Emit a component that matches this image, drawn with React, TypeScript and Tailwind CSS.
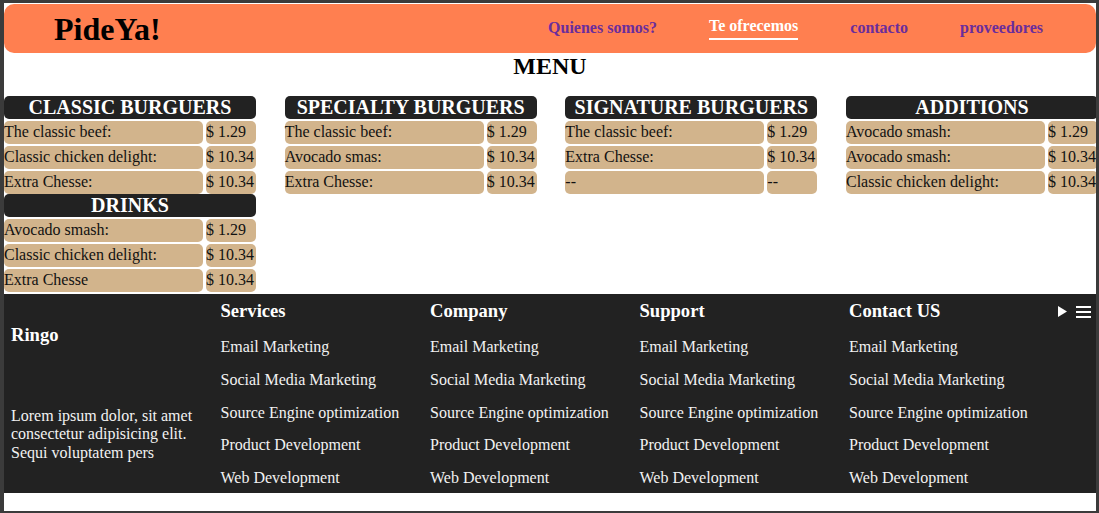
import React from "react";

type Item = [string, string];
type Section = { title: string; items: Item[] };

const sections: Section[] = [
  {
    title: "CLASSIC BURGUERS",
    items: [
      ["The classic beef:", "$ 1.29"],
      ["Classic chicken delight:", "$ 10.34"],
      ["Extra Chesse:", "$ 10.34"],
    ],
  },
  {
    title: "SPECIALTY BURGUERS",
    items: [
      ["The classic beef:", "$ 1.29"],
      ["Avocado smas:", "$ 10.34"],
      ["Extra Chesse:", "$ 10.34"],
    ],
  },
  {
    title: "SIGNATURE BURGUERS",
    items: [
      ["The classic beef:", "$ 1.29"],
      ["Extra Chesse:", "$ 10.34"],
      ["--", "--"],
    ],
  },
  {
    title: "ADDITIONS",
    items: [
      ["Avocado smash:", "$ 1.29"],
      ["Avocado smash:", "$ 10.34"],
      ["Classic chicken delight:", "$ 10.34"],
    ],
  },
  {
    title: "DRINKS",
    items: [
      ["Avocado smash:", "$ 1.29"],
      ["Classic chicken delight:", "$ 10.34"],
      ["Extra Chesse", "$ 10.34"],
    ],
  },
];

const links = [
  "Email Marketing",
  "Social Media Marketing",
  "Source Engine optimization",
  "Product Development",
  "Web Development",
];

function MenuCard({ s }: { s: Section }) {
  return (
    <div className="w-[252px] flex flex-col">
      <div className="h-[23px] bg-[#222222] rounded-[5px] flex items-center justify-center text-white font-bold text-[20px] leading-none pb-[1px]">
        {s.title}
      </div>
      {s.items.map(([n, p], i) => (
        <div key={i} className="mt-[2px] h-[23px] flex gap-[3px] text-[16px] text-[#111]">
          <div className="w-[199px] bg-[#d2b48c] rounded-[5px] flex items-center whitespace-nowrap pb-[1px]">{n}</div>
          <div className="w-[50px] bg-[#d2b48c] rounded-[5px] flex items-center whitespace-nowrap pb-[1px]">{p}</div>
        </div>
      ))}
    </div>
  );
}

function FooterCol({ title }: { title: string }) {
  return (
    <div className="flex flex-col">
      <div className="text-[18.6px] font-bold leading-[21px] text-white">{title}</div>
      <div className="mt-[17px] flex flex-col gap-[14.35px]">
        {links.map((l) => (
          <div key={l} className="text-[16px] leading-[18.4px] text-[#f2f2f2] whitespace-nowrap">
            {l}
          </div>
        ))}
      </div>
    </div>
  );
}

export default function App() {
  return (
    <div className="w-[1099px] h-[513px] bg-[#3b3b3b] pl-[4px] pt-[3px] pr-[3px] pb-[2px]">
      <div className="bg-white h-full overflow-hidden font-['Liberation_Serif',serif] text-black">
        <header className="mt-[1px] h-[49px] bg-[#ff7f50] rounded-[10px] flex items-center">
          <div className="ml-[50px] text-[32px] font-bold leading-none">PideYa!</div>
          <nav className="ml-auto mr-[53px] flex items-center gap-[52px] text-[16px] font-bold -mt-[1px]">
            <span className="text-[#6a2d9c]">Quienes somos?</span>
            <span className="text-white border-b-2 border-white pb-[3px] leading-[18px]">Te ofrecemos</span>
            <span className="text-[#6a2d9c]">contacto</span>
            <span className="text-[#6a2d9c]">proveedores</span>
          </nav>
        </header>
        <h2 className="text-center text-[24px] font-bold leading-[28px] -mt-[1px]">MENU</h2>
        <div className="mt-[16px] grid grid-cols-[repeat(4,252px)] gap-x-[28.67px] w-[1200px]">
          {sections.map((s) => (
            <MenuCard key={s.title} s={s} />
          ))}
        </div>
        <footer className="mt-[2px] h-[199px] bg-[#222222] text-white grid grid-cols-[repeat(5,209.5px)_1fr] pl-[7px] pt-[6px]">
          <div className="flex flex-col">
            <div className="mt-[24px] text-[18.6px] font-bold leading-[21px]">Ringo</div>
            <div className="mt-[62px] text-[16px] leading-[18.4px] text-[#f2f2f2] w-[200px]">
              Lorem ipsum dolor, sit amet consectetur adipisicing elit. Sequi voluptatem pers
            </div>
          </div>
          <FooterCol title="Services" />
          <FooterCol title="Company" />
          <FooterCol title="Support" />
          <FooterCol title="Contact US" />
          <div className="flex items-start gap-[8px] pt-[6px] ml-[-1px]">
            <svg width="10" height="11" viewBox="0 0 10 11">
              <polygon points="0,0 9,5.5 0,11" fill="white" />
            </svg>
            <svg width="15" height="12" viewBox="0 0 15 12">
              <rect x="0" y="0" width="15" height="2" fill="white" />
              <rect x="0" y="5" width="15" height="2" fill="white" />
              <rect x="0" y="10" width="15" height="2" fill="white" />
            </svg>
          </div>
        </footer>
      </div>
    </div>
  );
}
